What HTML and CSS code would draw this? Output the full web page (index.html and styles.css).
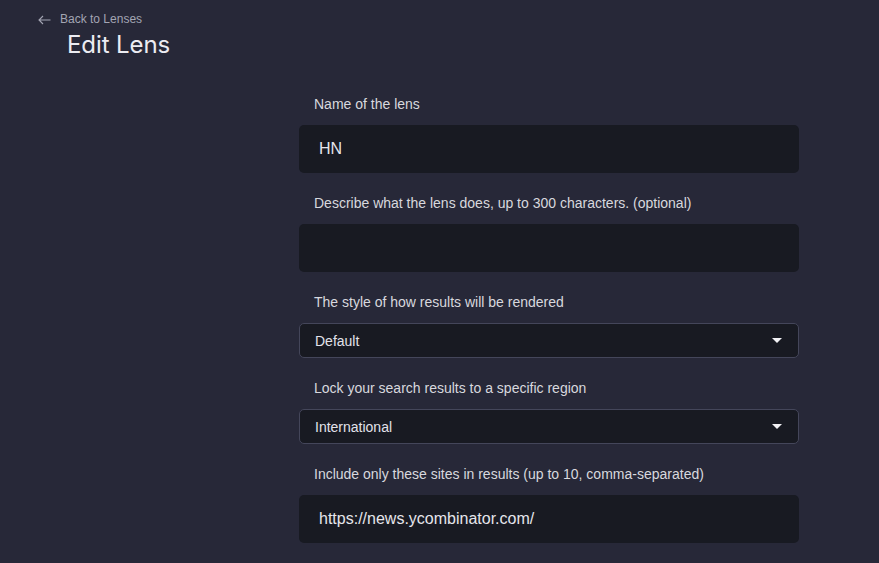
FILE: index.html
```html
<!DOCTYPE html>
<html lang="en">
<head>
<meta charset="utf-8">
<title>Edit Lens</title>
<link rel="stylesheet" href="styles.css">
</head>
<body>
<header class="page-header">
  <a class="back-link" href="#">
    <svg class="back-icon" width="13" height="10" viewBox="0 0 13 10" fill="none" stroke="currentColor" stroke-width="1.1"><path d="M12.5 5H1.2M5 1L1 5l4 4"/></svg>
    <span>Back to Lenses</span>
  </a>
  <h1 class="title">Edit Lens</h1>
</header>
<main class="form">
  <div class="field">
    <label class="label">Name of the lens</label>
    <div class="input">HN</div>
  </div>
  <div class="field">
    <label class="label">Describe what the lens does, up to 300 characters. (optional)</label>
    <div class="input"></div>
  </div>
  <div class="field">
    <label class="label">The style of how results will be rendered</label>
    <div class="select"><span>Default</span><span class="caret"></span></div>
  </div>
  <div class="field">
    <label class="label">Lock your search results to a specific region</label>
    <div class="select"><span>International</span><span class="caret"></span></div>
  </div>
  <div class="field">
    <label class="label">Include only these sites in results (up to 10, comma-separated)</label>
    <div class="input">https://news.ycombinator.com/</div>
  </div>
</main>
</body>
</html>
```
FILE: styles.css
```css
* { box-sizing: border-box; }
html, body { margin: 0; padding: 0; }
body {
  background: #272838;
  font-family: "Liberation Sans", Arial, sans-serif;
  color: #d8d8de;
  height: 563px;
  overflow: hidden;
}
.page-header {
  padding: 12px 0 0 38px;
}
.back-link {
  display: flex;
  align-items: center;
  gap: 9px;
  color: #a3a5b3;
  text-decoration: none;
  font-size: 12px;
  line-height: 14px;
}
.back-icon { display: block; margin-top: 1px; }
.title {
  margin: 5px 0 0 29px;
  font-family: "Inter", sans-serif;
  font-weight: 400;
  font-size: 24px;
  line-height: 28px;
  color: #ececf2;
  letter-spacing: -0.1px;
}
.form {
  width: 500px;
  margin: 35px 0 0 299px;
  display: flex;
  flex-direction: column;
  gap: 20px;
}
.field { display: flex; flex-direction: column; }
.label {
  display: block;
  font-size: 14px;
  line-height: 20px;
  padding-left: 15px;
  margin-bottom: 11px;
  color: #d8d8de;
}
.input {
  height: 48px;
  background: #181a22;
  border-radius: 5px;
  padding: 0 20px;
  display: flex;
  align-items: center;
  font-size: 16px;
  color: #e6e6ec;
}
.select {
  height: 35px;
  background: #181a22;
  border: 1px solid #44465a;
  border-radius: 5px;
  padding: 0 16px 0 15px;
  display: flex;
  align-items: center;
  justify-content: space-between;
  font-size: 14px;
  color: #e2e2ea;
}
.caret {
  width: 0;
  height: 0;
  border-left: 5px solid transparent;
  border-right: 5px solid transparent;
  border-top: 5px solid #f2f2f5;
}
```
